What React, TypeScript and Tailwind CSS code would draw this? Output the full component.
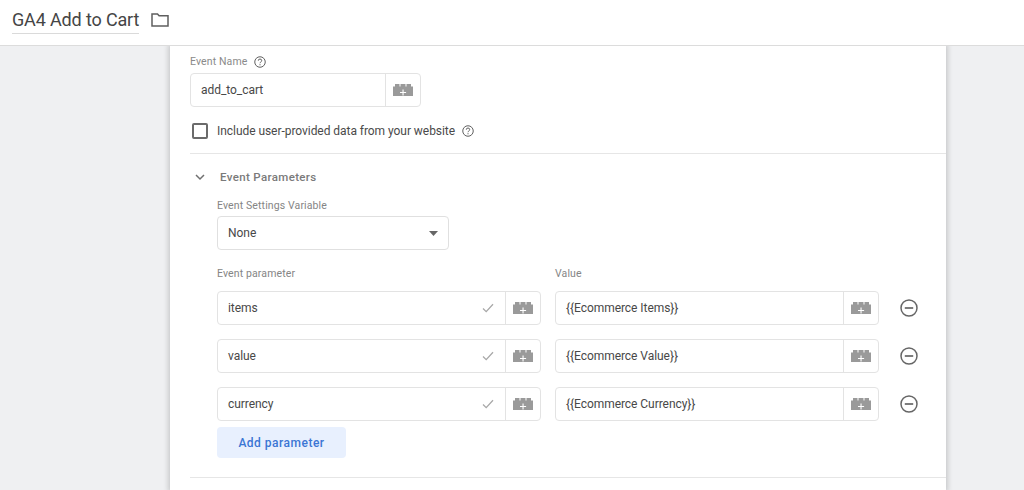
import React from "react";

function Brick() {
  return (
    <svg width="20" height="12" viewBox="0 0 20 12" className="block">
      <path fill="#9a9a9a" d="M0 2.5h2V0h4.5v2.5h1V0h5v2.5h1V0H18v2.5h2V12H0z" />
      <path fill="#fff" d="M9.5 5.5h1.1v2.4h2.5V9h-2.5v2.4H9.5V9H7V7.900h2.500z" />
    </svg>
  );
}

function Help() {
  return (
    <svg width="12" height="12" viewBox="0 0 24 24" fill="none" stroke="#616161" strokeWidth="2" className="block">
      <circle cx="12" cy="12" r="10.5" />
      <path d="M8.600 9.400a3.400 3.400 0 0 1 6.800 0c0 2.400-3.400 2.600-3.400 5" />
      <path d="M12 16.400v2.200" />
    </svg>
  );
}

function Check() {
  return (
    <svg width="12" height="10" viewBox="0 0 12 10" fill="none" stroke="#a8a8a8" strokeWidth="1.3" className="block">
      <path d="M1 5.500L4.200 8.600L11 1.200" />
    </svg>
  );
}

function Minus() {
  return (
    <svg width="18" height="18" viewBox="0 0 18 18" fill="none" stroke="#666" strokeWidth="1.5" className="block">
      <circle cx="9" cy="9" r="8" />
      <path d="M4.800 9h8.400" strokeWidth="1.7" />
    </svg>
  );
}

function Field({ text, width, check }: { text: string; width: string; check?: boolean }) {
  return (
    <div className={`flex h-[34px] items-stretch rounded-[4px] border border-[#e3e3e3] bg-white ${width}`}>
      <div className="flex min-w-0 flex-1 items-center pl-[10px] pr-[11px] text-[12px] tracking-[-0.05px] text-[#484848]">
        <span className="flex-1">{text}</span>
        {check && <Check />}
      </div>
      <div className="flex w-[35px] items-center justify-center border-l border-[#e3e3e3]">
        <Brick />
      </div>
    </div>
  );
}

function Row({ name, value }: { name: string; value: string }) {
  return (
    <div className="flex items-center">
      <Field text={name} width="w-[324px]" check />
      <div className="ml-[14px]">
        <Field text={value} width="w-[324px]" />
      </div>
      <div className="mb-[1px] ml-[21px]">
        <Minus />
      </div>
    </div>
  );
}

export default function App() {
  return (
    <div className="flex h-[490px] w-[1024px] flex-col overflow-hidden bg-[#eff0f2] font-['Roboto',sans-serif]">
      <header className="relative z-10 flex h-[46px] shrink-0 items-start border-b border-[#dcdcdc] bg-white pl-[12px]">
        <div className="mt-[7px] flex h-[27px] w-[127px] items-center border-b border-[#dadada] text-[18px] leading-none tracking-[-0.15px] whitespace-nowrap text-[#454545]">
          GA4 Add to Cart
        </div>
        <svg width="18" height="14" viewBox="0 0 18 14" fill="none" stroke="#5f5f5f" strokeWidth="1.5" className="mt-[13px] ml-[12px]">
          <path d="M1 1h5.500l1.600 1.800H17V13H1z" />
        </svg>
      </header>

      <main className="ml-[170px] flex w-[776px] flex-1 flex-col bg-white pt-[9px] shadow-[0_0_5px_2px_rgba(0,0,0,0.16)]">
        <div className="pl-[20px]">
          <div className="flex h-[13px] items-center gap-[7px] text-[10.5px] tracking-[0.12px] text-[#8a8a8a]">
            Event Name
            <Help />
          </div>
          <div className="mt-[5px]">
            <Field text="add_to_cart" width="w-[231px]" />
          </div>
          <div className="mt-[15px] flex items-center pl-[2px]">
            <div className="h-[16px] w-[16px] rounded-[2px] border-2 border-[#6b6b6b]" />
            <span className="ml-[9px] text-[12px] tracking-[-0.05px] text-[#4a4a4a]">Include user-provided data from your website</span>
            <div className="ml-[7px]">
              <Help />
            </div>
          </div>
          <div className="mt-[13px] border-t border-[#e6e6e6]" />
        </div>

        <div className="mt-[16px] flex items-center pl-[25px]">
          <svg width="10" height="7" viewBox="0 0 10 7" fill="none" stroke="#707070" strokeWidth="1.5">
            <path d="M1 1l4 4 4-4" />
          </svg>
          <span className="ml-[15px] text-[11.5px] leading-[14px] font-medium tracking-[0.35px] text-[#7a7a7a]">Event Parameters</span>
        </div>

        <div className="pl-[47px]">
          <div className="mt-[15px] text-[10.5px] leading-[13px] tracking-[0.12px] text-[#858585]">Event Settings Variable</div>
          <div className="mt-[4px] flex h-[34px] w-[232px] items-center justify-between rounded-[4px] border border-[#e0e0e0] pr-[10px] pl-[10px] text-[12px] tracking-[-0.05px] text-[#484848]">
            None
            <svg width="9" height="5" viewBox="0 0 9 5" className="block">
              <path fill="#666" d="M0 0h9L4.500 5z" />
            </svg>
          </div>
          <div className="mt-[17px] flex text-[10.5px] leading-[13px] tracking-[0.12px] text-[#858585]">
            <span className="w-[338px]">Event parameter</span>
            <span>Value</span>
          </div>
          <div className="mt-[11px] flex flex-col gap-[14px]">
            <Row name="items" value="{{Ecommerce Items}}" />
            <Row name="value" value="{{Ecommerce Value}}" />
            <Row name="currency" value="{{Ecommerce Currency}}" />
          </div>
          <button className="mt-[6px] block h-[31px] w-[129px] rounded-[4px] bg-[#e8f0fe] text-[12px] font-medium tracking-[0.5px] text-[#3b76d4]">
            Add parameter
          </button>
        </div>

        <div className="mt-[19px] ml-[20px] border-t border-[#e6e6e6]" />
      </main>
    </div>
  );
}
